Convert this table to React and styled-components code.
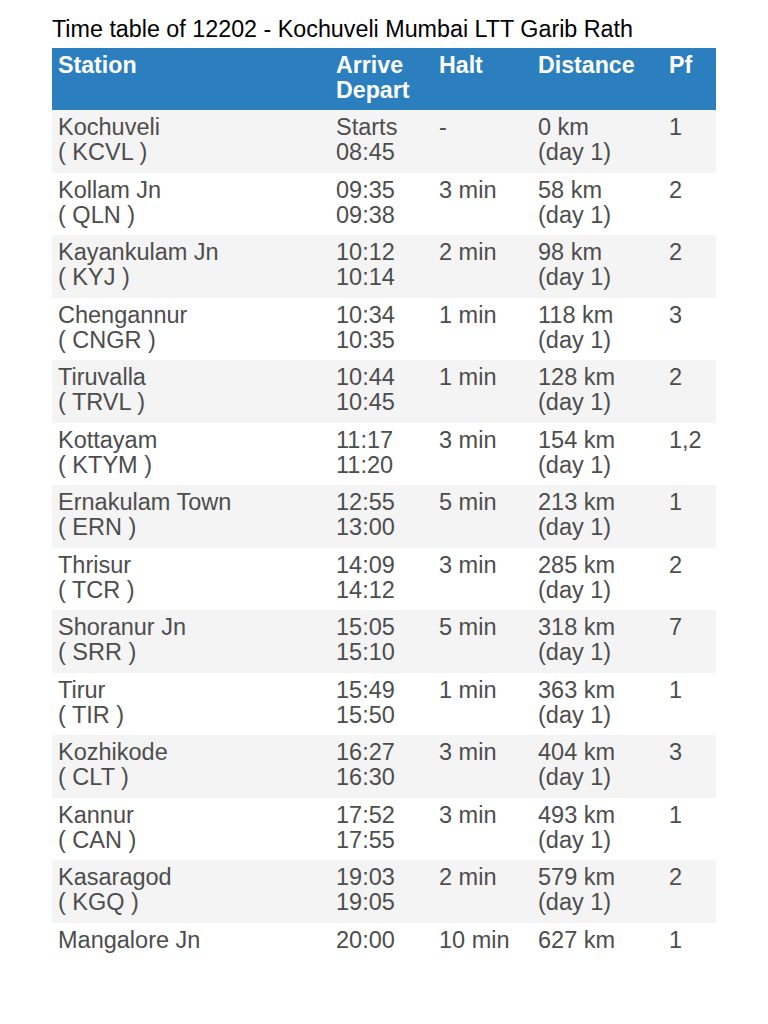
import styled, { createGlobalStyle } from 'styled-components';

const GlobalStyle = createGlobalStyle`
  html, body {
    margin: 0;
    padding: 0;
    background: #ffffff;
  }
  body {
    font-family: "Liberation Sans", Arial, Helvetica, sans-serif;
  }
`;

const Page = styled.div`
  width: 768px;
  height: 1024px;
  overflow: hidden;
  padding: 16px 52px 0 52px;
  box-sizing: border-box;
`;

const Title = styled.h1`
  margin: 0 0 6px 0;
  font-size: 23.3px;
  line-height: 26px;
  font-weight: normal;
  color: #000;
`;

const Table = styled.table`
  width: 664px;
  border-collapse: collapse;
  table-layout: fixed;
  font-size: 23.5px;
  line-height: 25px;
`;

const HeadRow = styled.tr`
  background: #2b7fbf;
`;

const Th = styled.th`
  width: ${(p) => p.$w}px;
  box-sizing: border-box;
  text-align: left;
  vertical-align: top;
  color: #fff;
  font-size: 23.2px;
  font-weight: bold;
  padding: 5px 6px 7px 6px;
`;

const Row = styled.tr`
  background: ${(p) => (p.$odd ? '#f4f4f4' : '#ffffff')};
  height: 62.5px;
`;

const Td = styled.td`
  vertical-align: top;
  color: #4d4d4d;
  padding: 5px 6px 7px 6px;
  box-sizing: border-box;
  white-space: nowrap;
`;

const rows = [
  ['Kochuveli', 'KCVL', 'Starts', '08:45', '-', '0 km', '1'],
  ['Kollam Jn', 'QLN', '09:35', '09:38', '3 min', '58 km', '2'],
  ['Kayankulam Jn', 'KYJ', '10:12', '10:14', '2 min', '98 km', '2'],
  ['Chengannur', 'CNGR', '10:34', '10:35', '1 min', '118 km', '3'],
  ['Tiruvalla', 'TRVL', '10:44', '10:45', '1 min', '128 km', '2'],
  ['Kottayam', 'KTYM', '11:17', '11:20', '3 min', '154 km', '1,2'],
  ['Ernakulam Town', 'ERN', '12:55', '13:00', '5 min', '213 km', '1'],
  ['Thrisur', 'TCR', '14:09', '14:12', '3 min', '285 km', '2'],
  ['Shoranur Jn', 'SRR', '15:05', '15:10', '5 min', '318 km', '7'],
  ['Tirur', 'TIR', '15:49', '15:50', '1 min', '363 km', '1'],
  ['Kozhikode', 'CLT', '16:27', '16:30', '3 min', '404 km', '3'],
  ['Kannur', 'CAN', '17:52', '17:55', '3 min', '493 km', '1'],
  ['Kasaragod', 'KGQ', '19:03', '19:05', '2 min', '579 km', '2'],
];

// the screenshot ends after the first line of this row
const lastRow = ['Mangalore Jn', '20:00', '10 min', '627 km', '1'];

const App = () => {
  return (
    <Page>
      <GlobalStyle />
      <Title>Time table of 12202 - Kochuveli Mumbai LTT Garib Rath</Title>
      <Table>
        <thead>
          <HeadRow>
            <Th $w={278}>Station</Th>
            <Th $w={103}>
              Arrive
              <br />
              Depart
            </Th>
            <Th $w={99}>Halt</Th>
            <Th $w={131}>Distance</Th>
            <Th $w={53}>Pf</Th>
          </HeadRow>
        </thead>
        <tbody>
          {rows.map((r, i) => (
            <Row key={r[0]} $odd={i % 2 === 0}>
              <Td>
                {r[0]}
                <br />( {r[1]} )
              </Td>
              <Td>
                {r[2]}
                <br />
                {r[3]}
              </Td>
              <Td>{r[4]}</Td>
              <Td>
                {r[5]}
                <br />
                (day 1)
              </Td>
              <Td>{r[6]}</Td>
            </Row>
          ))}
          <Row $odd={false}>
            {lastRow.map((v) => (
              <Td key={v}>{v}</Td>
            ))}
          </Row>
        </tbody>
      </Table>
    </Page>
  );
};

export default App;
